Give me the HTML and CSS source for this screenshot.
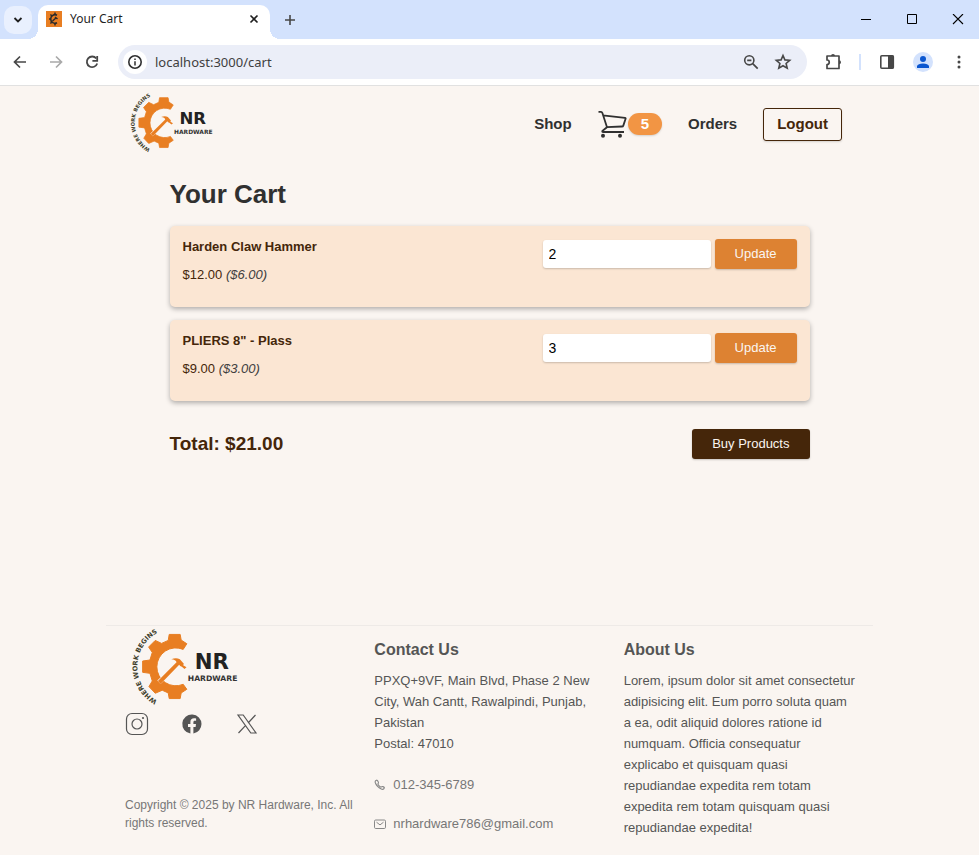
FILE: index.html
```html
<!DOCTYPE html>
<html lang="en">
<head>
<meta charset="utf-8">
<meta name="viewport" content="width=device-width, initial-scale=1">
<title>Your Cart</title>
<link rel="stylesheet" href="styles.css">
</head>
<body>
<svg class="defs" width="0" height="0" aria-hidden="true">
  <defs>
    <symbol id="brand" viewBox="90 36 340 240">
      <path fill="#e87e22" stroke="#e87e22" stroke-width="3" stroke-linejoin="round" d="M208 58H241L244 75L261 86L250 103A57 57 0 1 0 250 208L261 223L244 234L241 251H208L205 234L187 226L166 235L147 215L157 198L150 175L128 172V138L150 135L157 112L146 96L166 76L185 85L205 76Z"/>
      <path fill="none" stroke="#faf5f1" stroke-width="14" d="M177 202L236 146"/>
      <path fill="#e87e22" d="M174 198L230 142Q228 134 214 133Q229 126 240 133L252 146L250 151L260 157L254 162L246 155L241 153L238 149L182 207Z"/>
      <path id="tagline" fill="none" d="M172 257A116 116 0 0 1 184 48"/>
      <text class="brand-tag"><textPath href="#tagline">WHERE WORK BEGINS</textPath></text>
      <text class="brand-name" x="285" y="161">NR</text>
      <text class="brand-sub" x="264" y="198">HARDWARE</text>
    </symbol>
  </defs>
</svg>

<div class="tabstrip">
  <button class="tab-search" aria-label="Search tabs"><svg width="10" height="10" viewBox="0 0 10 10"><path d="M1.5 3L5 6.5L8.5 3" fill="none" stroke="#1f1f1f" stroke-width="1.8"/></svg></button>
  <div class="tab">
    <svg class="favicon" width="16" height="16" viewBox="0 0 16 16"><path fill="#e87e22" d="M0 0H16V16H0Z"/><path d="M11 4.2A4.3 4.3 0 1 0 11 11.8" fill="none" stroke="#2b2b2b" stroke-width="1.6"/><path d="M9 1.5V4M9 12V14.500M3 8H5M4.400 3.500L6 5M4.400 12.500L6 11M6.500 10L10.500 6.500M9 6L11.500 8" stroke="#2b2b2b" stroke-width="1.500"/></svg>
    <span class="tab-title">Your Cart</span>
    <button class="plain" aria-label="Close tab"><svg width="12" height="12" viewBox="0 0 12 12"><path d="M2.500 2.500L9.500 9.500M9.500 2.500L2.500 9.500" stroke="#1f1f1f" stroke-width="1.600"/></svg></button>
  </div>
  <button class="plain new-tab" aria-label="New tab"><svg width="12" height="12" viewBox="0 0 12 12"><path d="M6 1V11M1 6H11" stroke="#474747" stroke-width="1.600"/></svg></button>
  <div class="window-controls">
    <button class="plain" aria-label="Minimize"><svg width="12" height="12" viewBox="0 0 12 12"><path d="M1 5.500H11" stroke="#000"/></svg></button>
    <button class="plain" aria-label="Maximize"><svg width="12" height="12" viewBox="0 0 12 12"><path d="M1.500 .5H10.500V9.500H1.500Z" fill="none" stroke="#000"/></svg></button>
    <button class="plain" aria-label="Close"><svg width="12" height="12" viewBox="0 0 12 12"><path d="M1 0L11 10M11 0L1 10" stroke="#000" stroke-width="1.100"/></svg></button>
  </div>
</div>

<div class="toolbar">
  <button class="plain" aria-label="Back"><svg width="16" height="16" viewBox="0 0 16 16"><path d="M14 8H3M8 2.500L2.500 8L8 13.500" fill="none" stroke="#474747" stroke-width="1.700"/></svg></button>
  <button class="plain" aria-label="Forward"><svg width="16" height="16" viewBox="0 0 16 16"><path d="M2 8H13M8 2.500L13.500 8L8 13.500" fill="none" stroke="#a9a9a9" stroke-width="1.700"/></svg></button>
  <button class="plain" aria-label="Reload"><svg width="16" height="16" viewBox="0 0 16 16"><path d="M12.300 4.500A5.300 5.300 0 1 0 13.200 9.500" fill="none" stroke="#474747" stroke-width="1.800"/><path d="M13.200 2V6.800H8.400" fill="none" stroke="#474747" stroke-width="1.800"/></svg></button>
  <div class="omnibox">
    <button class="site-info" aria-label="Site information"><svg width="16" height="16" viewBox="0 0 16 16"><circle cx="8" cy="8" r="6.200" fill="none" stroke="#303030" stroke-width="1.600"/><path d="M8 7.200V11.500M8 4.500V6" stroke="#303030" stroke-width="1.500"/></svg></button>
    <input class="address" type="text" value="localhost:3000/cart" aria-label="Address">
    <button class="plain" aria-label="Zoom"><svg width="16" height="16" viewBox="0 0 16 16"><circle cx="6.300" cy="6.300" r="4.600" fill="none" stroke="#474747" stroke-width="1.600"/><path d="M9.700 9.700L14.700 14.700M4.200 6.300H8.400" stroke="#474747" stroke-width="1.700"/></svg></button>
    <button class="plain" aria-label="Bookmark"><svg width="18" height="18" viewBox="0 0 18 18"><path d="M9 2.500L10.900 6.900L15.700 7.300L12.100 10.500L13.200 15.200L9 12.700L4.800 15.200L5.900 10.500L2.300 7.300L7.100 6.900Z" fill="none" stroke="#474747" stroke-width="1.600"/></svg></button>
  </div>
  <button class="plain extensions" aria-label="Extensions"><svg width="18" height="18" viewBox="0 0 18 18"><path d="M2 3H14V15.500H2V11.500A2.200 2.200 0 0 0 2 7Z" fill="none" stroke="#474747" stroke-width="1.700" stroke-linejoin="round"/><path d="M6 3A2 2 0 0 1 10 3ZM14 7.200A2 2 0 0 1 14 11.200Z" fill="#474747"/></svg></button>
  <span class="separator"></span>
  <button class="plain side-panel" aria-label="Side panel"><svg width="16" height="16" viewBox="0 0 16 16"><rect x="1.800" y="1.800" width="12.500" height="12.500" rx="1" fill="none" stroke="#474747" stroke-width="1.600"/><path d="M9 1.500H14.500V14.500H9Z" fill="#474747"/></svg></button>
  <button class="profile" aria-label="Profile"><svg width="14" height="14" viewBox="0 0 14 14"><circle cx="7" cy="4" r="3" fill="#0b57d0"/><path d="M1 13V11Q2 8.500 7 8.500T13 11V13Z" fill="#0b57d0"/></svg></button>
  <button class="plain" aria-label="Menu"><svg width="16" height="16" viewBox="0 0 16 16" fill="#474747"><circle cx="8" cy="3" r="1.500"/><circle cx="8" cy="8" r="1.500"/><circle cx="8" cy="13" r="1.500"/></svg></button>
</div>

<div class="page">
  <header class="site-header">
    <a href="#" aria-label="NR Hardware"><svg class="logo"><use href="#brand"/></svg></a>
    <nav class="nav">
      <a href="#">Shop</a>
      <a class="cart-link" href="#" aria-label="Cart">
        <svg width="30" height="28" viewBox="0 0 30 28" fill="none" stroke="#303030" stroke-width="1.800"><path d="M.5 1.900H3Q4 1.900 4.400 3L9 17.200M4.800 5.300L27 7.800Q27.900 8 27.600 8.800L25.300 15.600Q25 16.500 24 16.500L9 17.200L4.500 20.800Q3.800 22 5.200 22H26"/><circle cx="5" cy="25.700" r="2" fill="#303030" stroke="none"/><circle cx="22" cy="25.700" r="2" fill="#303030" stroke="none"/></svg>
        <span class="badge">5</span>
      </a>
      <a href="#">Orders</a>
      <button class="logout">Logout</button>
    </nav>
  </header>

  <main class="cart">
    <h1>Your Cart</h1>
    <ul class="items">
      <li class="item">
        <div>
          <h2>Harden Claw Hammer</h2>
          <p>$12.00 <em>($6.00)</em></p>
        </div>
        <form class="quantity">
          <input type="text" inputmode="numeric" value="2" aria-label="Quantity of Harden Claw Hammer">
          <button class="update" type="button">Update</button>
        </form>
      </li>
      <li class="item">
        <div>
          <h2>PLIERS 8" - Plass</h2>
          <p>$9.00 <em>($3.00)</em></p>
        </div>
        <form class="quantity">
          <input type="text" inputmode="numeric" value="3" aria-label="Quantity of PLIERS 8 inch">
          <button class="update" type="button">Update</button>
        </form>
      </li>
    </ul>
    <div class="summary">
      <p class="total">Total: $21.00</p>
      <button class="buy">Buy Products</button>
    </div>
  </main>

  <footer class="site-footer">
    <div class="brand-column">
      <a href="#" aria-label="NR Hardware"><svg class="footer-logo"><use href="#brand"/></svg></a>
      <div class="social">
        <a href="#" aria-label="Instagram"><svg width="24" height="24" viewBox="0 0 24 24" fill="none" stroke="#555" stroke-width="1.200"><rect x="1.500" y="1.500" width="21" height="21" rx="5.500"/><circle cx="12" cy="12" r="5"/><circle cx="18" cy="6" r="1.100" fill="#555" stroke="none"/></svg></a>
        <a href="#" aria-label="Facebook"><svg width="24" height="24" viewBox="0 0 24 24"><path fill="#555" d="M21.500 12.100a9.600 9.600 0 1 0-11.100 9.500v-6.700H8v-2.800h2.400V10c0-2.400 1.400-3.700 3.600-3.700 1 0 2.100.2 2.100.2v2.300h-1.200c-1.200 0-1.500.7-1.500 1.500v1.800h2.600l-.4 2.800h-2.200v6.700a9.600 9.600 0 0 0 8.100-9.500Z"/></svg></a>
        <a href="#" aria-label="X"><svg width="24" height="24" viewBox="0 0 24 24" fill="none" stroke="#555" stroke-width="1.200"><path d="M3 3H8.200L21 21H15.800ZM20.500 3L13.100 11M10.900 13.200L3.500 21"/></svg></a>
      </div>
      <p class="copyright">Copyright © 2025 by NR Hardware, Inc. All rights reserved.</p>
    </div>
    <div>
      <h3>Contact Us</h3>
      <address>PPXQ+9VF, Main Blvd, Phase 2 New City, Wah Cantt, Rawalpindi, Punjab, Pakistan<br>Postal: 47010</address>
      <ul class="contacts">
        <li><a href="#"><svg width="12" height="12" viewBox="0 0 512 512" fill="none" stroke="#888" stroke-width="48"><path d="M451 374c-15.900-16-54.300-39.400-73-48.700-24.300-12.300-26.300-13.300-45.400.9-12.700 9.500-21.200 17.900-36.100 14.800s-47.300-21.100-75.700-49.400-47.300-61.600-50.500-76.500 5.400-23.200 14.800-36c13.200-18 12.200-21 .900-45.300C177.200 115.100 153 77 137 61.100c-16.800-16.600-16.800-13.400-27.800-8.800a160 160 0 0 0-25.500 13.600C68 76.200 59.400 84.800 53.300 97.800s-13.200 43.200 18 99.800 53 85.600 93.500 126 76 65.200 126.500 93.500c62.500 35 86.500 28.200 99.500 22.200s21.600-14.600 32.200-30.200a159 159 0 0 0 13.600-25.400c4.600-10.800 7.500-10.800-9.600-27.700Z"/></svg>012-345-6789</a></li>
        <li><a href="#"><svg width="12" height="12" viewBox="0 0 12 12" fill="none" stroke="#888" stroke-linejoin="round"><rect x=".5" y="2" width="11" height="8.500" rx="1.200"/><path d="M2.500 4.200L6 6.900L9.500 4.200"/></svg>nrhardware786@gmail.com</a></li>
      </ul>
    </div>
    <div>
      <h3>About Us</h3>
      <p class="about">Lorem, ipsum dolor sit amet consectetur adipisicing elit. Eum porro soluta quam a ea, odit aliquid dolores ratione id numquam. Officia consequatur explicabo et quisquam quasi repudiandae expedita rem totam expedita rem totam quisquam quasi repudiandae expedita!</p>
    </div>
  </footer>
</div>
</body>
</html>
```
FILE: styles.css
```css
* { box-sizing: border-box; }

body {
  margin: 0;
  min-height: 100vh;
  display: flex;
  flex-direction: column;
  background: #faf5f1;
  color: #303030;
  font: 13px/20px "Liberation Sans", Arial, sans-serif;
}

h1, h2, h3, p, ul { margin: 0; padding: 0; }
ul { list-style: none; }
a { color: inherit; text-decoration: none; }
svg { display: block; }
button, input { font: inherit; border: 0; padding: 0; margin: 0; }
button { cursor: pointer; }
.defs { position: absolute; }
.plain { background: none; }

/* Browser window */
.tabstrip {
  display: flex;
  align-items: center;
  height: 39px;
  padding: 0 15px 0 4px;
  background: #d3e2fd;
}
.tab-search {
  display: grid;
  place-items: center;
  width: 28px;
  height: 28px;
  border-radius: 10px;
  background: #e9f0fe;
}
.tab {
  position: relative;
  display: flex;
  align-items: center;
  gap: 8px;
  align-self: flex-end;
  width: 232px;
  height: 34px;
  margin-left: 6px;
  padding: 0 10px 6px 8px;
  border-radius: 10px 10px 0 0;
  background: #fff;
}
.tab::before, .tab::after {
  content: "";
  position: absolute;
  bottom: 0;
  width: 10px;
  height: 10px;
}
.tab::before {
  right: 100%;
  background: radial-gradient(circle at 0 0, transparent 10px, #fff 10px);
}
.tab::after {
  left: 100%;
  background: radial-gradient(circle at 100% 0, transparent 10px, #fff 10px);
}
.tab-title {
  flex: 1;
  color: #1f1f1f;
  font: 12px/16px "Noto Sans", "Open Sans", sans-serif;
}
.new-tab { margin-left: 14px; }
.window-controls { display: flex; gap: 34px; margin-left: auto; }

.toolbar {
  display: flex;
  align-items: center;
  height: 47px;
  padding: 0 12px;
  border-bottom: 1px solid #e1e1e1;
  background: #fff;
}
.toolbar > .plain + .plain { margin-left: 20px; }
.omnibox {
  display: flex;
  align-items: center;
  flex: 1;
  gap: 15px;
  height: 34px;
  margin-left: 18px;
  padding: 0 15px 0 5px;
  border-radius: 17px;
  background: #ebeef8;
}
.site-info {
  display: grid;
  place-items: center;
  width: 24px;
  height: 24px;
  border-radius: 50%;
  background: #fff;
}
.address {
  flex: 1;
  min-width: 0;
  margin-left: -7px;
  background: none;
  color: #404040;
  font: 13px/20px "Noto Sans", "Open Sans", sans-serif;
}
.extensions { margin-left: 18px; }
.separator { width: 2px; height: 16px; margin-left: 16px; background: #d3e2fd; }
.side-panel { margin-left: 18px; }
.profile {
  display: grid;
  place-items: center;
  width: 20px;
  height: 20px;
  margin: 0 18px;
  border-radius: 50%;
  background: #d3e2fd;
}

/* Logo lettering */
.brand-tag, .brand-name, .brand-sub { font-family: "DejaVu Sans", sans-serif; font-weight: bold; }
.brand-tag { fill: #403e2c; font-size: 20px; }
.brand-name { fill: #222; font-size: 64px; }
.brand-sub { fill: #333; font-size: 23px; }
.logo { width: 88px; height: 62px; }
.footer-logo { width: 113px; height: 80px; }

/* Page */
.page {
  flex: 1;
  display: flex;
  flex-direction: column;
  width: 100%;
  max-width: 767px;
  margin: 0 auto;
}
.site-header {
  display: flex;
  align-items: center;
  justify-content: space-between;
  padding: 6px 31px 6px 23px;
}
.nav {
  display: flex;
  align-items: center;
  gap: 26px;
  padding-top: 2px;
  font-size: 15px;
  font-weight: bold;
}
.cart-link { display: flex; align-items: center; }
.badge {
  padding: 1px 13px;
  border-radius: 11px;
  background: #f29544;
  color: #fff;
  box-shadow: 0 1px 2px rgba(0, 0, 0, .15);
}
.logout {
  height: 33px;
  padding: 0 13px;
  border: 1px solid #45260a;
  border-radius: 3px;
  background: none;
  color: #45260a;
  box-shadow: 0 1px 2px rgba(0, 0, 0, .15);
}

.cart { width: 100%; max-width: 640px; margin: 0 auto; padding-top: 18px; }
h1 { font-size: 26px; line-height: 32px; }
.items { display: grid; gap: 13px; margin-top: 16px; }
.item {
  display: flex;
  align-items: flex-start;
  justify-content: space-between;
  padding: 13px 13px 22px;
  border-radius: 5px;
  background: #fbe6d3;
  color: #45260a;
  box-shadow: 0 2px 5px rgba(0, 0, 0, .3);
}
.item h2 { font-size: 13px; line-height: 16px; }
.item p { margin-top: 10px; }
.item em { color: #404040; }
.quantity { display: flex; align-items: center; gap: 4px; }
.quantity input {
  width: 168px;
  height: 28px;
  padding: 0 6px;
  border-radius: 3px;
  background: #fff;
  color: #000;
  font-size: 14px;
  box-shadow: 0 1px 2px rgba(0, 0, 0, .2);
}
.update, .buy {
  height: 30px;
  padding: 0 20px;
  border-radius: 3px;
  background: #dd8232;
  color: #faf5f1;
  box-shadow: 0 1px 2px rgba(0, 0, 0, .2);
}
.buy { background: #45260a; }
.summary {
  display: flex;
  align-items: center;
  justify-content: space-between;
  margin-top: 28px;
}
.total { color: #45260a; font-size: 19px; font-weight: bold; }

.site-footer {
  display: grid;
  grid-template-columns: repeat(3, 1fr);
  margin-top: auto;
  padding: 1px 0 17px 19px;
  border-top: 1px solid #eeeae7;
  color: #555;
}
.site-footer > div { padding-right: 16px; }
.brand-column { display: flex; flex-direction: column; }
.footer-logo { margin-left: 5px; }
.social { display: flex; gap: 31px; margin-top: 5px; }
.copyright {
  margin-top: auto;
  margin-bottom: 6px;
  color: #777;
  font-size: 12px;
  line-height: 18px;
}
h3 { margin: 13px 0 10px; font-size: 16px; line-height: 20px; }
address { font-style: normal; }
address, .about { line-height: 21px; }
.contacts { display: grid; gap: 19px; margin-top: 21px; color: #777; }
.contacts a { display: flex; align-items: center; gap: 7px; }
```
